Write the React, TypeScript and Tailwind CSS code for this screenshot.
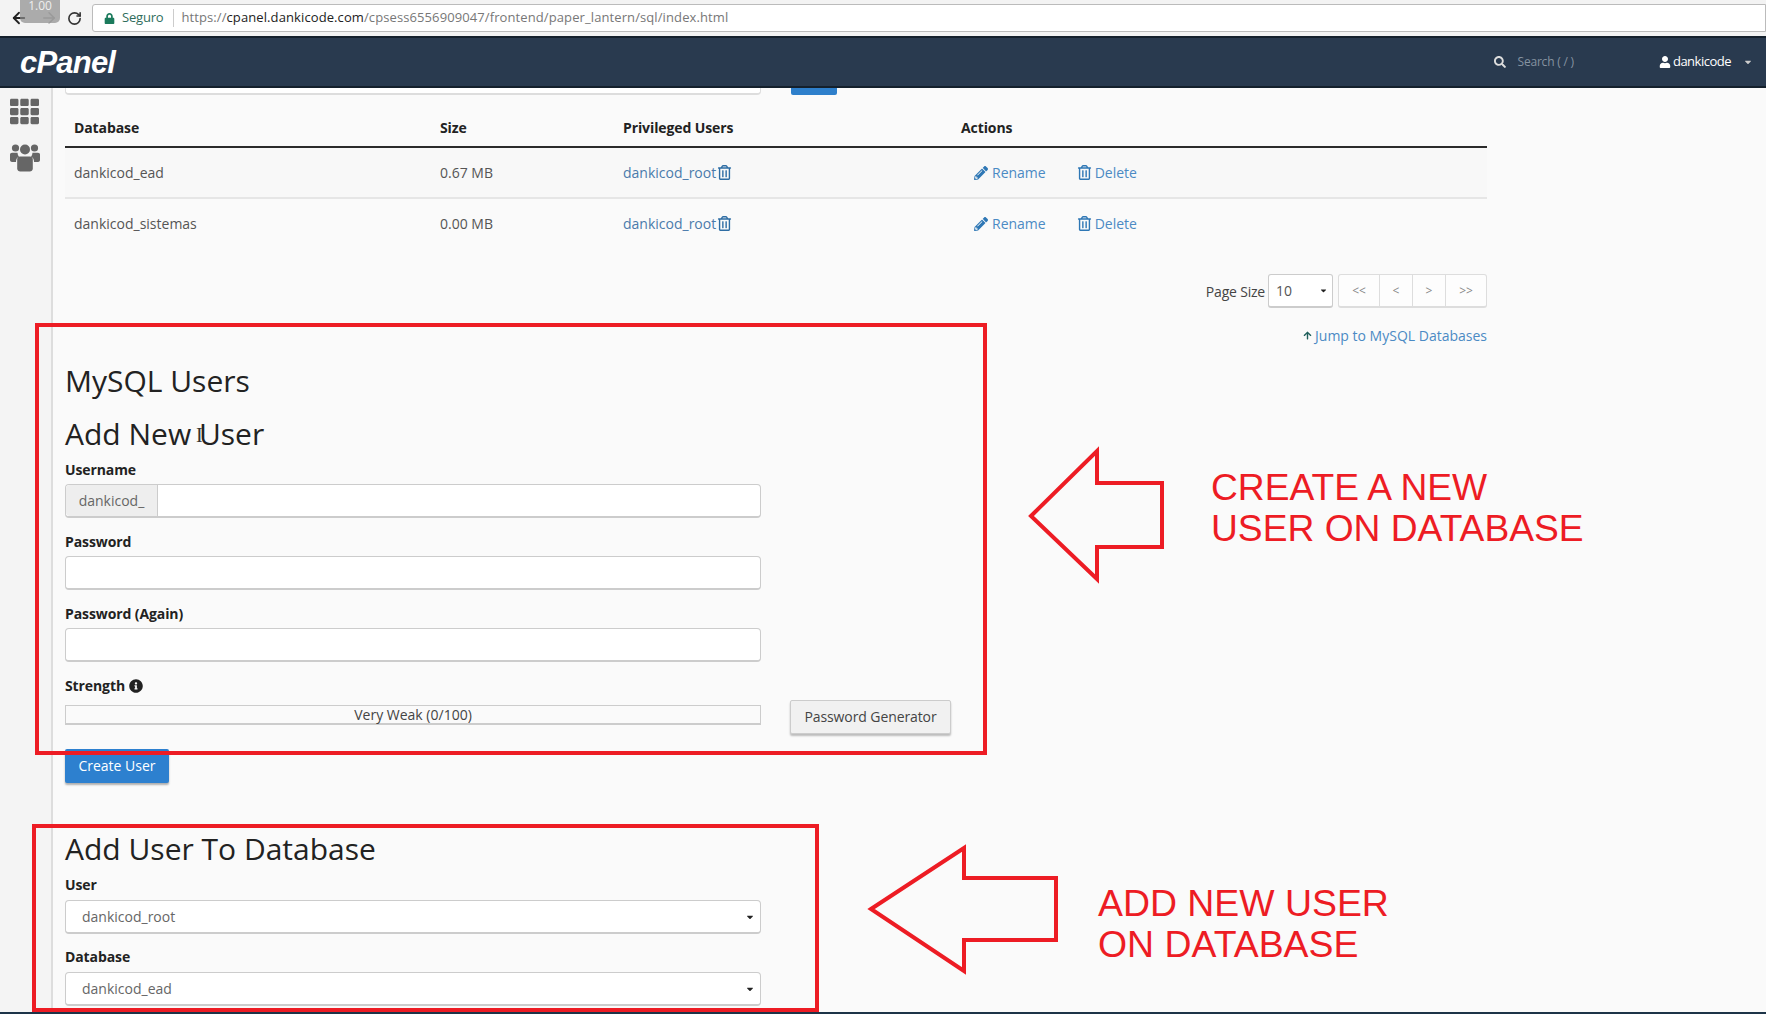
import { FaPencilAlt, FaRegTrashAlt, FaSearch, FaUser, FaTh, FaInfoCircle, FaLock, FaArrowUp, FaCaretDown } from "react-icons/fa"
import { ArrowLeft, ArrowRight, RotateCw } from "lucide-react"

const rows = [
  { name: "dankicod_ead", size: "0.67 MB" },
  { name: "dankicod_sistemas", size: "0.00 MB" },
]

function Label({ children }: { children: React.ReactNode }) {
  return <div className="text-[14px] leading-[20px] font-bold text-[#222] tracking-[-0.1px]">{children}</div>
}

function TextBox() {
  return <input readOnly className="block h-[34px] w-[696px] rounded-[4px] border border-[#ccc] border-b-[2px] bg-white" />
}

function SelectBox({ value }: { value: string }) {
  return (
    <div className="flex h-[34px] w-[696px] items-center justify-between rounded-[4px] border border-[#ccc] border-b-[2px] bg-white pl-[16px] pr-[5px] text-[14px] text-[#666]">
      <span>{value}</span>
      <FaCaretDown className="text-[10px] text-[#222]" />
    </div>
  )
}

function UsersIcon() {
  return (
    <svg width="30" height="29" viewBox="0 0 30 29" fill="currentColor">
      <circle cx="5.5" cy="5" r="3.6" />
      <circle cx="24.5" cy="5" r="3.6" />
      <circle cx="15" cy="6.5" r="5" />
      <path d="M0 11.5c0-1 1-1.800 2-1.800h5.500a7 7 0 0 0 1.500 4c-2 .8-3 2.500-3 4.800v.5H2c-1 0-2-.8-2-2z" />
      <path d="M30 11.500c0-1-1-1.800-2-1.800h-5.500a7 7 0 0 1-1.500 4c2 .8 3 2.500 3 4.800v.5h4c1 0 2-.8 2-2z" />
      <path d="M10 13.500h10c1.800 0 2.800 1.300 2.800 3v9c0 1.800-1.500 3-3 3h-9.600c-1.500 0-3-1.200-3-3v-9c0-1.700 1-3 2.800-3z" />
    </svg>
  )
}

export default function App() {
  return (
    <div className="relative h-[1014px] w-[1766px] overflow-hidden bg-[#fafafa] font-['Open_Sans',sans-serif] text-[14px]">
      {/* browser chrome */}
      <div className="flex h-[38px] items-center border-b-[2px] border-[#14202c] bg-[#f3f3f3] pl-[10px]">
        <ArrowLeft className="h-[18px] w-[18px] text-[#222]" strokeWidth={2.4} />
        <ArrowRight className="ml-[12px] h-[18px] w-[18px] text-[#bbb]" />
        <RotateCw className="ml-[9px] h-[15px] w-[15px] text-[#333]" strokeWidth={2.6} />
        <div className="ml-[10px] flex h-[28px] flex-1 items-center rounded-l-[3px] border border-[#bbb] bg-white pl-[11px] text-[13px] tracking-[0.1px]">
          <FaLock className="text-[11px] text-[#1b7a5c]" />
          <span className="ml-[7px] tracking-[-0.2px] text-[#2f6d5c]">Seguro</span>
          <span className="ml-[10px] h-[18px] w-px bg-[#ccc]" />
          <span className="ml-[7px] text-[#777]">https://</span>
          <span className="text-[#222]">cpanel.dankicode.com</span>
          <span className="text-[#777]">/cpsess6556909047/frontend/paper_lantern/sql/index.html</span>
        </div>
      </div>

      {/* cpanel header */}
      <div className="flex h-[50px] items-center justify-between border-b-[2px] border-[#14202c] bg-[#293a4f] pl-[20px] pr-[13px] text-white">
        <span className="font-['Liberation_Sans',sans-serif] text-[31px] font-bold italic leading-none tracking-[-0.8px]">cPanel</span>
        <div className="flex items-center text-[12px] tracking-[-0.2px]">
          <FaSearch className="text-[12px] text-[#ddd]" />
          <span className="ml-[12px] text-[#8592a0]">Search ( / )</span>
          <FaUser className="ml-[85px] text-[12px]" />
          <span className="ml-[2px] text-[13px] tracking-[-0.5px]">dankicode</span>
          <FaCaretDown className="ml-[12px] text-[10px] text-[#ccc]" />
        </div>
      </div>

      <div className="flex h-[926px]">
        {/* sidebar */}
        <div className="flex w-[53px] shrink-0 flex-col items-center border-r-[2px] border-[#ddd] bg-[#f4f4f4] pl-[1px] pr-[3px] pt-[9px] text-[#666]">
          <FaTh className="text-[29px]" />
          <div className="mt-[17px]"><UsersIcon /></div>
        </div>

        {/* main */}
        <div className="flex-1 pl-[12px]">
          <div className="flex h-[7px] items-start">
            <div className="h-[7px] w-[696px] rounded-b-[4px] border-x border-b-[2px] border-[#ddd] bg-white" />
            <div className="ml-[30px] h-[7px] w-[46px] rounded-b-[2px] bg-[#2e7fcb]" />
          </div>

          <div className="w-[1422px]">
            <div className="grid h-[53px] grid-cols-[366px_183px_338px_1fr] items-end border-b-[2px] border-[#2b2b2b] pb-[8px] pl-[9px] font-bold text-[#222] tracking-[-0.1px]">
              <span>Database</span>
              <span>Size</span>
              <span>Privileged Users</span>
              <span>Actions</span>
            </div>
            {rows.map((row, i) => (
              <div
                key={row.name}
                className={`grid grid-cols-[366px_183px_338px_1fr] items-center pl-[9px] text-[#555] ${i === 0 ? "h-[51px] border-b-[2px] border-[#e6e6e6] bg-[#f8f8f8]" : "h-[49px]"}`}
              >
                <span>{row.name}</span>
                <span>{row.size}</span>
                <span className="flex items-center text-[#4a7bab]">
                  dankicod_root
                  <FaRegTrashAlt className="ml-[1px] text-[15px] text-[#2e6da4]" />
                </span>
                <span className="flex items-center pl-[13px] text-[#4b8ac4]">
                  <FaPencilAlt className="text-[14px] text-[#2e77b5]" />
                  <span className="ml-[4px]">Rename</span>
                  <FaRegTrashAlt className="ml-[31px] text-[15px] text-[#2e77b5]" />
                  <span className="ml-[3px]">Delete</span>
                </span>
              </div>
            ))}

            <div className="mt-[26px] flex items-center justify-end">
              <span className="text-[#444] tracking-[-0.2px]">Page Size</span>
              <div className="ml-[3px] flex h-[34px] w-[65px] items-center justify-between rounded-[3px] border border-[#ccc] border-b-[2px] bg-white pl-[7px] pr-[4px] text-[#555]">
                <span>10</span>
                <FaCaretDown className="text-[9px] text-[#222]" />
              </div>
              <div className="ml-[5px] flex h-[34px] w-[149px] rounded-[3px] border border-[#ddd] border-b-[2px] bg-[#fdfdfd] text-[12px] text-[#888]">
                <span className="flex w-[41px] items-center justify-center border-r border-[#ddd]">&lt;&lt;</span>
                <span className="flex w-[33px] items-center justify-center border-r border-[#ddd]">&lt;</span>
                <span className="flex w-[33px] items-center justify-center border-r border-[#ddd]">&gt;</span>
                <span className="flex flex-1 items-center justify-center">&gt;&gt;</span>
              </div>
            </div>
            <div className="mt-[17px] flex items-center justify-end text-[#4b8ac4]">
              <FaArrowUp className="mr-[3px] text-[9px] text-[#1f5f5b]" />
              Jump to MySQL Databases
            </div>
          </div>

          <div className="mt-[15px] text-[30px] leading-[40px] text-[#222]">MySQL Users</div>
          <div className="mt-[13px] text-[30px] leading-[40px] text-[#222]">Add New User</div>

          <div className="mt-[6px]"><Label>Username</Label></div>
          <div className="mt-[4px] flex h-[34px] w-[696px] rounded-[4px] border border-[#ccc] border-b-[2px] bg-white">
            <span className="flex w-[92px] items-center justify-center rounded-l-[4px] border-r border-[#ccc] bg-[#eee] text-[#666]">dankicod_</span>
          </div>

          <div className="mt-[14px]"><Label>Password</Label></div>
          <div className="mt-[4px]"><TextBox /></div>

          <div className="mt-[14px]"><Label>Password (Again)</Label></div>
          <div className="mt-[4px]"><TextBox /></div>

          <div className="mt-[14px] flex items-center">
            <Label>Strength</Label>
            <FaInfoCircle className="ml-[4px] text-[14px] text-[#222]" />
          </div>
          <div className="mt-[4px] flex w-[886px] items-start">
            <div className="mt-[5px] flex h-[20px] w-[696px] items-center justify-center border border-[#ccc] border-b-[2px] bg-[#fafafa] text-[14px] text-[#444]">
              Very Weak (0/100)
            </div>
            <div className="ml-[29px] flex h-[34px] w-[161px] items-center justify-center rounded-[2px] border border-[#ccc] bg-[#f1f1f1] pb-[2px] text-[#444] tracking-[-0.1px] shadow-[0_2px_2px_rgba(0,0,0,0.25)]">
              Password Generator
            </div>
          </div>

          <div className="mt-[15px] flex h-[34px] w-[104px] items-center justify-center rounded-[2px] bg-[#2d80cf] pb-[2px] text-white shadow-[0_2px_2px_rgba(0,0,0,0.3)]">
            Create User
          </div>

          <div className="mt-[46px] text-[30px] leading-[40px] text-[#222]">Add User To Database</div>
          <div className="mt-[6px]"><Label>User</Label></div>
          <div className="mt-[5px]"><SelectBox value="dankicod_root" /></div>
          <div className="mt-[13px]"><Label>Database</Label></div>
          <div className="mt-[5px]"><SelectBox value="dankicod_ead" /></div>
        </div>
      </div>

      {/* playback speed badge from the video */}
      <div className="absolute left-[20px] top-0 flex h-[23px] w-[40px] items-start justify-center rounded-b-[5px] bg-[#8c8c8c]/70 text-[12px] leading-[12px] text-[#eee]">
        1.00
      </div>

      {/* text cursor */}
      <div className="absolute left-[196px] top-[425px] font-['Liberation_Serif',serif] text-[20px] leading-[20px] text-[#333]">I</div>

      {/* red annotations drawn over the recording */}
      <div className="absolute left-[35px] top-[323px] h-[432px] w-[952px] border-[4px] border-[#ed1c24]" />
      <div className="absolute left-[32px] top-[824px] h-[188px] w-[787px] border-[4px] border-[#ed1c24]" />

      <svg className="absolute left-0 top-0" width="1766" height="1014" fill="none" stroke="#ed1c24" strokeWidth="4">
        <path d="M1031 516 L1097 451 V483 H1162 V547 H1097 V579 Z" />
        <path d="M871 909 L964 848 V878 H1056 V940 H964 V971 Z" />
      </svg>

      <div className="absolute left-[1211px] top-[467px] font-['Liberation_Sans',sans-serif] text-[37.2px] leading-[41px] text-[#ed1c24]">
        CREATE A NEW
        <br />
        USER ON DATABASE
      </div>
      <div className="absolute left-[1098px] top-[883px] font-['Liberation_Sans',sans-serif] text-[37.4px] leading-[41px] text-[#ed1c24]">
        ADD NEW USER
        <br />
        ON DATABASE
      </div>

      {/* player bar edge */}
      <div className="absolute bottom-0 left-0 h-[2px] w-full bg-[#1d3448]" />
    </div>
  )
}
